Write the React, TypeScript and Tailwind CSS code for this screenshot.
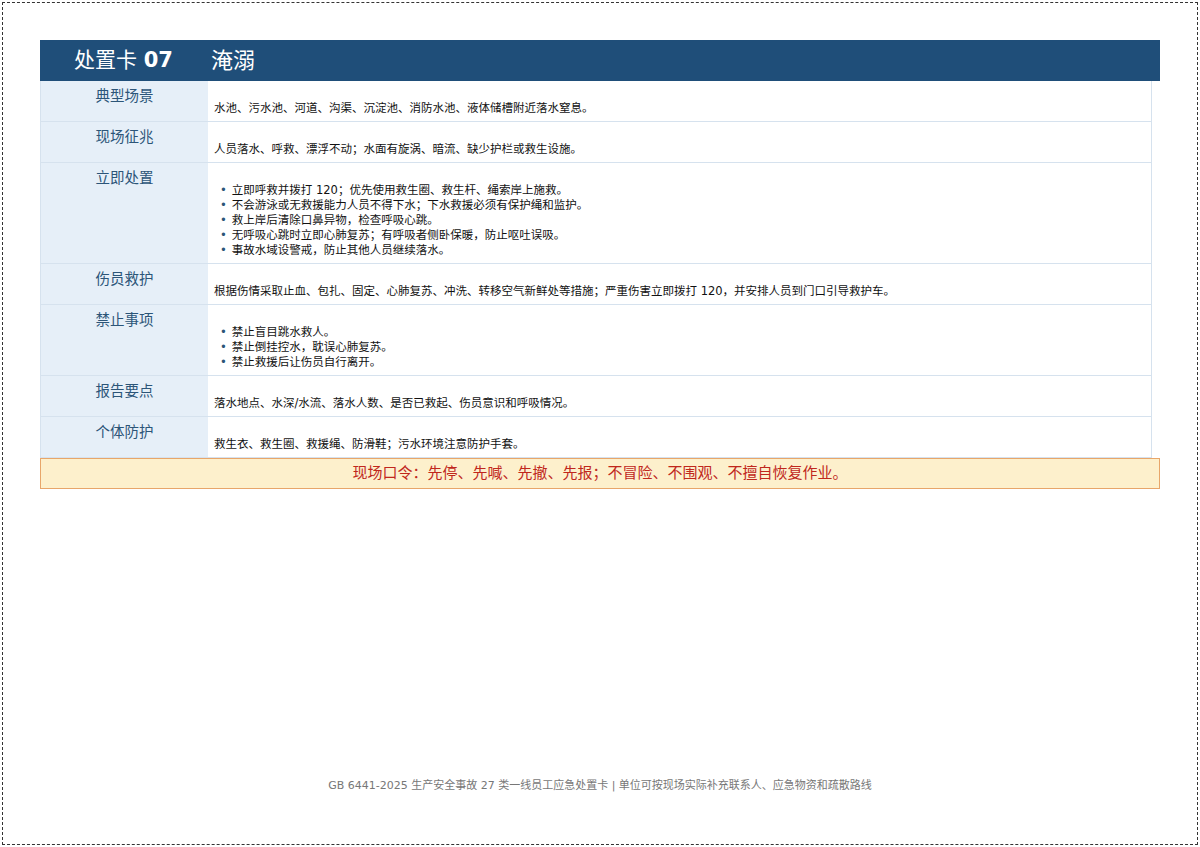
const rows: { label: string; text?: string; items?: string[] }[] = [
  { label: "典型场景", text: "水池、污水池、河道、沟渠、沉淀池、消防水池、液体储槽附近落水窒息。" },
  { label: "现场征兆", text: "人员落水、呼救、漂浮不动；水面有旋涡、暗流、缺少护栏或救生设施。" },
  {
    label: "立即处置",
    items: [
      "立即呼救并拨打 120；优先使用救生圈、救生杆、绳索岸上施救。",
      "不会游泳或无救援能力人员不得下水；下水救援必须有保护绳和监护。",
      "救上岸后清除口鼻异物，检查呼吸心跳。",
      "无呼吸心跳时立即心肺复苏；有呼吸者侧卧保暖，防止呕吐误吸。",
      "事故水域设警戒，防止其他人员继续落水。",
    ],
  },
  { label: "伤员救护", text: "根据伤情采取止血、包扎、固定、心肺复苏、冲洗、转移空气新鲜处等措施；严重伤害立即拨打 120，并安排人员到门口引导救护车。" },
  { label: "禁止事项", items: ["禁止盲目跳水救人。", "禁止倒挂控水，耽误心肺复苏。", "禁止救援后让伤员自行离开。"] },
  { label: "报告要点", text: "落水地点、水深/水流、落水人数、是否已救起、伤员意识和呼吸情况。" },
  { label: "个体防护", text: "救生衣、救生圈、救援绳、防滑鞋；污水环境注意防护手套。" },
];

export default function App() {
  return (
    <div
      className="w-[1200px] h-[847px] bg-white p-[2px]"
      style={{ fontFamily: '"DejaVu Sans", "Noto Sans CJK SC", sans-serif' }}
    >
      <div className="w-full h-full border border-dashed border-[#333] flex flex-col px-[37px] pt-[37px]">
        <div className="flex items-center h-[41px] bg-[#1f4e79] text-white">
          <div className="w-[167px] text-center text-[21px]">
            处置卡 <span className="font-bold">07</span>
          </div>
          <div className="pl-[4px] text-[22px]">淹溺</div>
        </div>
        <div className="mr-[8px] border-l border-r border-[#d6e2ee]">
          {rows.map((r) => (
            <div key={r.label} className="flex border-b border-[#d6e2ee]">
              <div className="w-[167px] shrink-0 bg-[#e6eff8] text-center text-[#2c5578] text-[14.5px] pt-[4px] leading-[22px]">
                {r.label}
              </div>
              <div className="flex-1 bg-white pl-[6px] pt-[20px] pb-[5px] text-[11.5px] leading-[15px] text-[#111]">
                {r.text ? (
                  r.text
                ) : (
                  <ul className="pl-[6px]">
                    {r.items!.map((it) => (
                      <li key={it}>
                        <span className="text-[#2c5578] mr-[5px]">•</span>
                        {it}
                      </li>
                    ))}
                  </ul>
                )}
              </div>
            </div>
          ))}
        </div>
        <div className="h-[31px] flex items-center justify-center bg-[#fdf0cc] border border-[#e8a66a] text-[#c0271c] text-[15px]">
          现场口令：先停、先喊、先撤、先报；不冒险、不围观、不擅自恢复作业。
        </div>
        <div className="mt-auto mb-[50px] text-center text-[11px] text-[#777]">
          GB 6441-2025 生产安全事故 27 类一线员工应急处置卡 | 单位可按现场实际补充联系人、应急物资和疏散路线
        </div>
      </div>
    </div>
  );
}
